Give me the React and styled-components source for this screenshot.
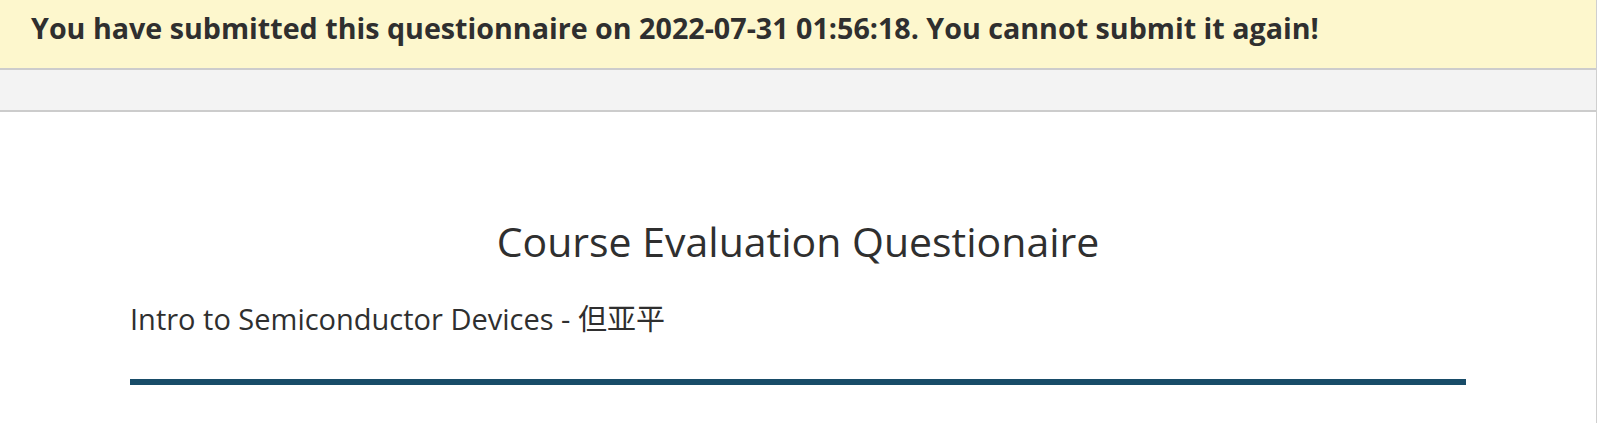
import React from 'react';
import styled, { createGlobalStyle } from 'styled-components';

const GlobalStyle = createGlobalStyle`
  html, body {
    margin: 0;
    padding: 0;
    background: #ffffff;
  }
  body {
    font-family: "Open Sans", "Noto Sans CJK SC", sans-serif;
    color: #2f2f2f;
  }
`;

export default function App() {
  return (
    <>
      <GlobalStyle />
      <Page>
        <Notice>
          You have submitted this questionnaire on 2022-07-31 01:56:18. You cannot submit it again!
        </Notice>
        <Toolbar />
        <Sheet>
          <Title>Course Evaluation Questionaire</Title>
          <Course>Intro to Semiconductor Devices - 但亚平</Course>
          <Divider />
        </Sheet>
      </Page>
    </>
  );
}

const Page = styled.div`
  width: 1596px;
  min-height: 423px;
  border-right: 1px solid #cfcfcf;
  background: #ffffff;
`;

const Notice = styled.div`
  height: 68px;
  box-sizing: border-box;
  display: flex;
  align-items: center;
  padding: 0 0 13px 31px;
  background: #fdf7cd;
  font-size: 28.66px;
  font-weight: 700;
  color: #2f2f2f;
  white-space: nowrap;
`;

const Toolbar = styled.div`
  height: 40px;
  background: #f3f3f3;
  border-top: 2px solid #cccccc;
  border-bottom: 2px solid #cccccc;
`;

const Sheet = styled.div`
  padding: 104px 130px 30px;
`;

const Title = styled.h1`
  margin: 0;
  text-align: center;
  font-size: 41px;
  font-weight: 400;
  line-height: 50px;
  color: #2f2f2f;
`;

const Course = styled.div`
  margin-top: 33px;
  font-size: 29px;
  line-height: 40px;
  color: #2f2f2f;
`;

const Divider = styled.div`
  margin-top: 40px;
  height: 6px;
  background: #184c68;
`;
